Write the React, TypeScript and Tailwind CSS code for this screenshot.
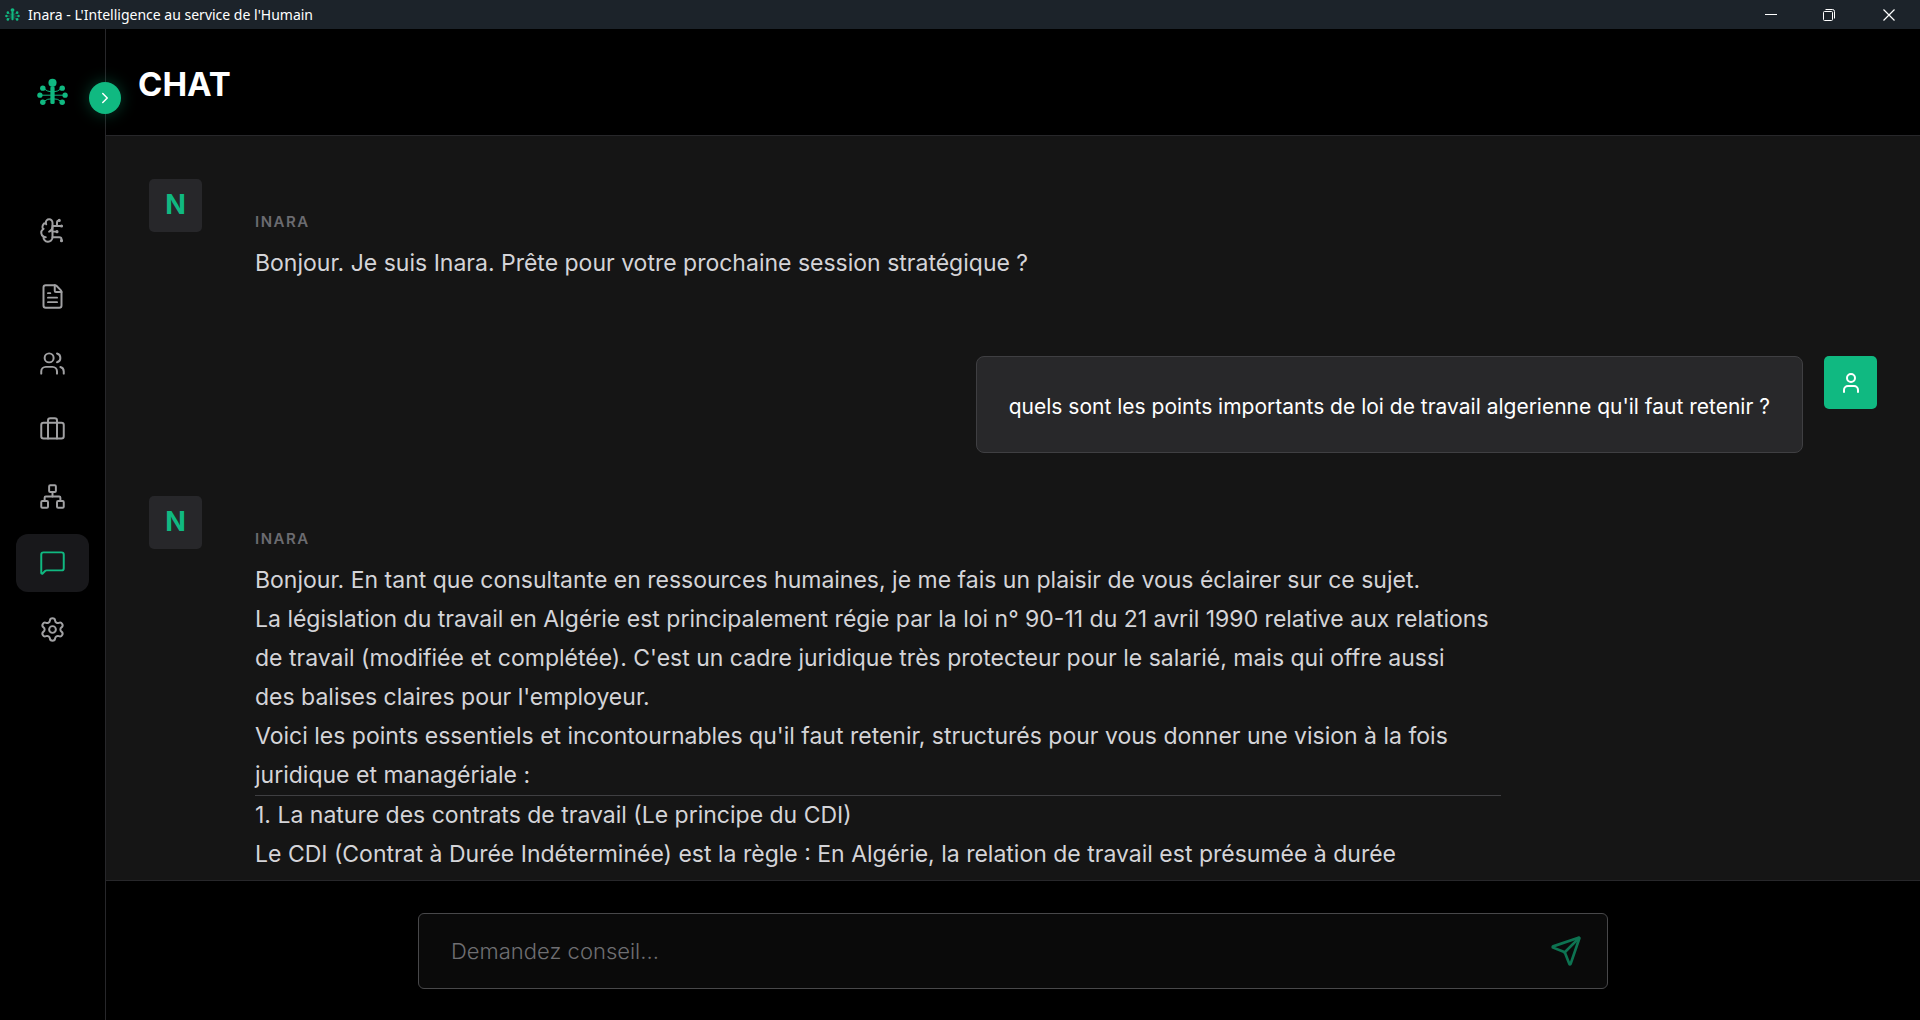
import React, { useState } from 'react';
import {
  BrainCircuit,
  FileText,
  Users,
  Briefcase,
  Network,
  MessageSquare,
  Settings,
  ChevronRight,
  User,
  Send,
} from 'lucide-react';

interface Message {
  from: 'inara' | 'user';
  blocks: string[][];
}

const navItems = [
  { label: 'Intelligence', icon: BrainCircuit },
  { label: 'Documents', icon: FileText },
  { label: 'Équipe', icon: Users },
  { label: 'Missions', icon: Briefcase },
  { label: 'Organigramme', icon: Network },
  { label: 'Chat', icon: MessageSquare },
  { label: 'Paramètres', icon: Settings },
];

// Each block of a message is separated from the next one by a rule
const messages: Message[] = [
  {
    from: 'inara',
    blocks: [['Bonjour. Je suis Inara. Prête pour votre prochaine session stratégique ?']],
  },
  {
    from: 'user',
    blocks: [["quels sont les points importants de loi de travail algerienne qu'il faut retenir ?"]],
  },
  {
    from: 'inara',
    blocks: [
      [
        'Bonjour. En tant que consultante en ressources humaines, je me fais un plaisir de vous éclairer sur ce sujet.',
        "La législation du travail en Algérie est principalement régie par la loi n° 90-11 du 21 avril 1990 relative aux relations de travail (modifiée et complétée). C'est un cadre juridique très protecteur pour le salarié, mais qui offre aussi\ndes balises claires pour l'employeur.",
        "Voici les points essentiels et incontournables qu'il faut retenir, structurés pour vous donner une vision à la fois juridique et managériale :",
      ],
      [
        '1. La nature des contrats de travail (Le principe du CDI)',
        'Le CDI (Contrat à Durée Indéterminée) est la règle : En Algérie, la relation de travail est présumée à durée',
      ],
    ],
  },
];

const Logo = ({ className }: { className: string }) => (
  <svg viewBox="0 0 32 28" className={className} fill="#10b981" stroke="#10b981" aria-hidden="true">
    <g strokeWidth="1" fill="none">
      <path d="M16 14 11 13 6 10M16 14 21 13 26 10" />
      <path d="M3 17.3H29" />
      <path d="M16 21 11 21.5 6 24.5M16 21 21 21.5 26 24.5" />
    </g>
    <g stroke="none">
      <circle cx="16" cy="4.5" r="4.2" />
      <rect x="13.8" y="8" width="4.4" height="18.5" rx="1.6" />
      <circle cx="6" cy="10" r="2.8" />
      <circle cx="26" cy="10" r="2.8" />
      <circle cx="3" cy="17.3" r="2.7" />
      <circle cx="29" cy="17.3" r="2.7" />
      <circle cx="6" cy="24.5" r="2.8" />
      <circle cx="26" cy="24.5" r="2.8" />
    </g>
  </svg>
);

const TitleBar = () => (
  <div className="h-[29px] shrink-0 flex items-center bg-[#1c232a] text-white">
    <Logo className="w-[15px] h-[13px] ml-[5px] mr-2" />
    <span className="flex-1 text-[14px] leading-5 font-['Noto_Sans','Open_Sans',sans-serif]">
      Inara - L'Intelligence au service de l'Humain
    </span>
    <div className="flex h-full">
      <button aria-label="Réduire" className="w-[58px] flex items-center justify-center">
        <svg width="12" height="12" viewBox="0 0 12 12" stroke="currentColor">
          <path d="M0 5.5H12" />
        </svg>
      </button>
      <button aria-label="Restaurer" className="w-[58px] flex items-center justify-center">
        <svg width="12" height="12" viewBox="0 0 12 12" fill="none" stroke="currentColor">
          <rect x="0.5" y="2.5" width="9" height="9" rx="1" />
          <path d="M2.5 0.5H9.5A2 2 0 0 1 11.5 2.5V9.5" />
        </svg>
      </button>
      <button aria-label="Fermer" className="w-[62px] flex items-center justify-center">
        <svg width="12" height="12" viewBox="0 0 12 12" stroke="currentColor" strokeWidth="1.2">
          <path d="M0.5 0.5 11.5 11.5M11.5 0.5 0.5 11.5" />
        </svg>
      </button>
    </div>
  </div>
);

const Sidebar = ({ active, onSelect }: { active: string; onSelect: (label: string) => void }) => (
  <aside className="relative w-[106px] shrink-0 border-r border-[#27272a] bg-black px-4 pt-[49px]">
    <div className="flex justify-center">
      <Logo className="w-[31px] h-7" />
    </div>

    {/* Expand toggle */}
    <button
      aria-label="Déplier le menu"
      className="absolute top-[53px] -right-4 z-10 w-8 h-8 rounded-full bg-[#10b981] text-white flex items-center justify-center shadow-[0_0_16px_rgba(16,185,129,0.35)]"
    >
      <ChevronRight size={18} />
    </button>

    <nav className="mt-[95px] h-[457px] flex flex-col justify-between">
      {navItems.map((item) => (
        <button
          key={item.label}
          aria-label={item.label}
          onClick={() => onSelect(item.label)}
          className={`h-[58px] w-full rounded-xl flex items-center justify-center ${
            item.label === active ? 'bg-[#18181b] text-[#10b981]' : 'text-[#a1a1a3]'
          }`}
        >
          <item.icon size={27} strokeWidth={1.75} />
        </button>
      ))}
    </nav>
  </aside>
);

const InaraMessage = ({ blocks }: { blocks: string[][] }) => (
  <div className="flex items-start gap-[21px]">
    <div className="w-[53px] h-[53px] shrink-0 rounded-[5px] bg-[#27272a] text-[#10b981] text-[27px] font-bold flex items-center justify-center">
      N
    </div>
    <div className="max-w-[1310px] px-8 pt-8 pb-[30px]">
      <p className="text-[15px] leading-[21px] font-semibold tracking-widest uppercase text-[#6b6b70]">Inara</p>
      <div className="mt-3 text-[23px] leading-[39px] text-[#d4d4d8] whitespace-pre-line">
        {blocks.map((lines, i) => (
          <div key={i} className={i > 0 ? 'border-t border-[#3f3f42]' : ''}>
            {lines.map((line) => (
              <p key={line}>{line}</p>
            ))}
          </div>
        ))}
      </div>
    </div>
  </div>
);

const UserMessage = ({ blocks }: { blocks: string[][] }) => (
  <div className="flex items-start justify-end gap-[21px]">
    <div className="rounded-lg border border-[#3f3f42] bg-[#28282a] px-8 pt-8 pb-7 text-[21px] leading-[35px] text-white">
      {blocks.flat().map((line) => (
        <p key={line}>{line}</p>
      ))}
    </div>
    <div className="w-[53px] h-[53px] shrink-0 rounded-[5px] bg-[#10b981] text-white flex items-center justify-center">
      <User size={24} />
    </div>
  </div>
);

const App: React.FC = () => {
  const [active, setActive] = useState('Chat');
  const [draft, setDraft] = useState('');

  return (
    <div className="h-screen flex flex-col bg-black overflow-hidden font-[Inter,sans-serif]">
      <TitleBar />
      <div className="flex-1 min-h-0 flex">
        <Sidebar active={active} onSelect={setActive} />

        <div className="flex-1 min-w-0 flex flex-col">
          <header className="h-[107px] shrink-0 border-b border-[#27272a] px-8 pt-1 flex items-center">
            <h1 className="text-[33px] leading-10 font-bold text-white uppercase">Chat</h1>
          </header>

          <main className="flex-1 min-h-0 overflow-y-auto [scrollbar-width:none] bg-[#151515] px-[43px] pt-[43px] flex flex-col gap-[43px]">
            {messages.map((message, i) =>
              message.from === 'user' ? (
                <UserMessage key={i} blocks={message.blocks} />
              ) : (
                <InaraMessage key={i} blocks={message.blocks} />
              )
            )}
          </main>

          <footer className="shrink-0 border-t border-[#27272a] px-8 pt-8 pb-[31px]">
            <form
              onSubmit={(e) => e.preventDefault()}
              className="mx-auto max-w-[1190px] h-[76px] flex items-center rounded-md border border-[#48484a] bg-[#0a0a0a] pl-8 pr-[25px]"
            >
              <input
                type="text"
                aria-label="Message"
                value={draft}
                onChange={(e) => setDraft(e.target.value)}
                placeholder="Demandez conseil..."
                className="flex-1 min-w-0 bg-transparent text-[22px] leading-8 font-light text-white placeholder:text-[#6f6f72] outline-none"
              />
              <button type="submit" aria-label="Envoyer" className="text-[#10b981] opacity-60">
                <Send size={32} />
              </button>
            </form>
          </footer>
        </div>
      </div>
    </div>
  );
};

export default App;
